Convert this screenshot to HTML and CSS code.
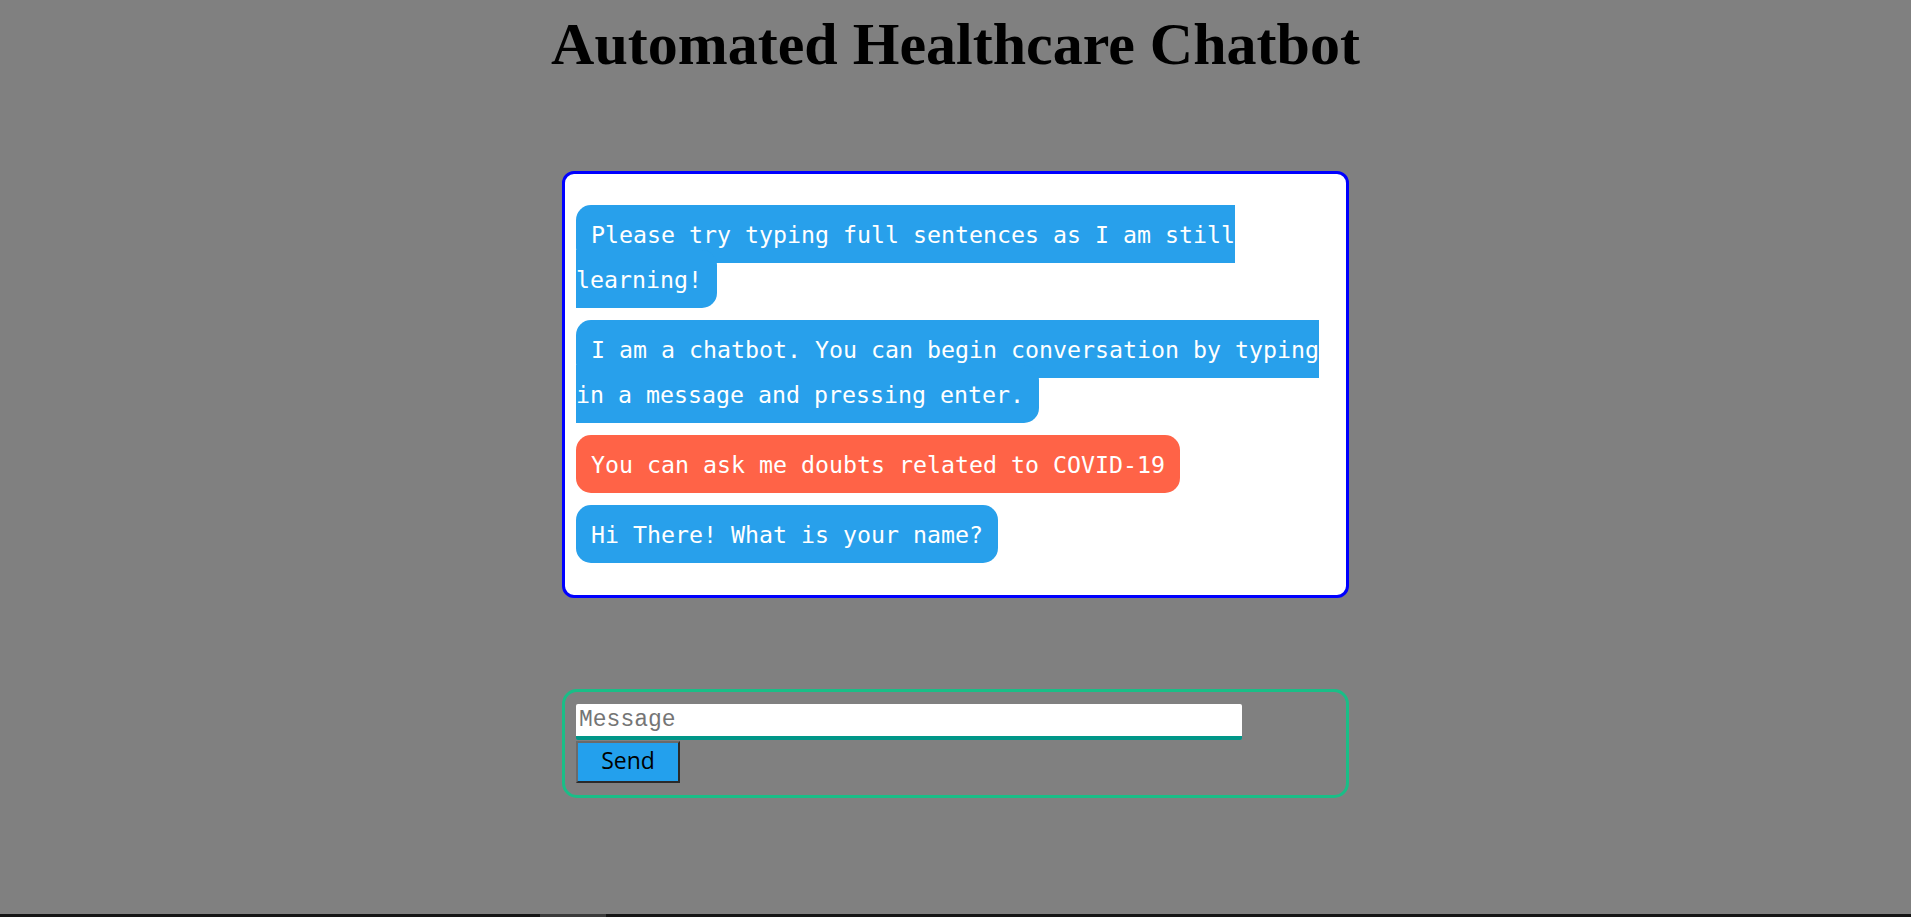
FILE: index.html
```html
<!DOCTYPE html>
<html lang="en">
<head>
<meta charset="utf-8">
<title>Automated Healthcare Chatbot</title>
<link rel="stylesheet" href="styles.css">
</head>
<body>
  <h1 class="title">Automated Healthcare Chatbot</h1>
  <div class="chatbox">
    <p class="msg"><span class="bubble bot">Please try typing full sentences as I am still learning!</span></p>
    <p class="msg"><span class="bubble bot">I am a chatbot. You can begin conversation by typing in a message and pressing enter.</span></p>
    <p class="msg"><span class="bubble alert">You can ask me doubts related to COVID-19</span></p>
    <p class="msg"><span class="bubble bot">Hi There! What is your name?</span></p>
  </div>
  <div class="inputbox">
    <input class="textinput" type="text" placeholder="Message">
    <button class="send" type="button">Send</button>
  </div>
  <div class="hscroll"><div class="hthumb"></div></div>
</body>
</html>
```

FILE: styles.css
```css
html, body {
  margin: 0;
  padding: 0;
}
body {
  background: #808080;
  min-height: 917px;
}
.title {
  margin: 10px 0 0;
  font-family: "Liberation Serif", "Times New Roman", serif;
  font-weight: bold;
  font-size: 60px;
  line-height: normal;
  text-align: center;
  color: #000;
}
.chatbox {
  box-sizing: border-box;
  width: 787px;
  margin: 92px auto 0;
  background: #fff;
  border: 3px solid #0000ff;
  border-radius: 12px;
  padding: 13px 11px;
}
.msg {
  margin: 25px 0;
  font-family: "DejaVu Sans Mono", "Liberation Mono", monospace;
  font-size: 23.25px;
  line-height: 45px;
}
.bubble {
  padding: 16px 15px 15px;
  border-radius: 15px;
  color: #fff;
}
.bot {
  background: #28a0eb;
}
.alert {
  background: #ff6347;
}
.inputbox {
  box-sizing: border-box;
  width: 787px;
  margin: 91px auto 0;
  border: 3px solid #19be87;
  border-radius: 15px;
  padding: 12px 11px;
}
.textinput {
  display: block;
  box-sizing: border-box;
  width: 666px;
  height: 36px;
  margin: 0;
  padding: 0 3px;
  border: 0;
  border-bottom: 4px solid #009688;
  border-radius: 2px;
  background: #fff;
  font-family: "Liberation Mono", "DejaVu Sans Mono", monospace;
  font-size: 23px;
  color: #000;
  outline: none;
}
.textinput::placeholder {
  color: #757575;
}
.send {
  display: block;
  box-sizing: border-box;
  width: 104px;
  height: 42px;
  margin: 1px 0 0;
  padding: 0 0 4px;
  background: #23a0ed;
  border-style: solid;
  border-width: 2px;
  border-color: #6a6a6a #2a2a2a #2a2a2a #6a6a6a;
  font-family: "Open Sans", "Noto Sans", sans-serif;
  font-size: 23px;
  color: #000;
  cursor: pointer;
}
.hscroll {
  position: fixed;
  left: 0;
  right: 0;
  bottom: 0;
  height: 3px;
  background: #141414;
}
.hthumb {
  position: absolute;
  left: 540px;
  top: 0;
  width: 66px;
  height: 3px;
  background: #3a3a3a;
}
```
